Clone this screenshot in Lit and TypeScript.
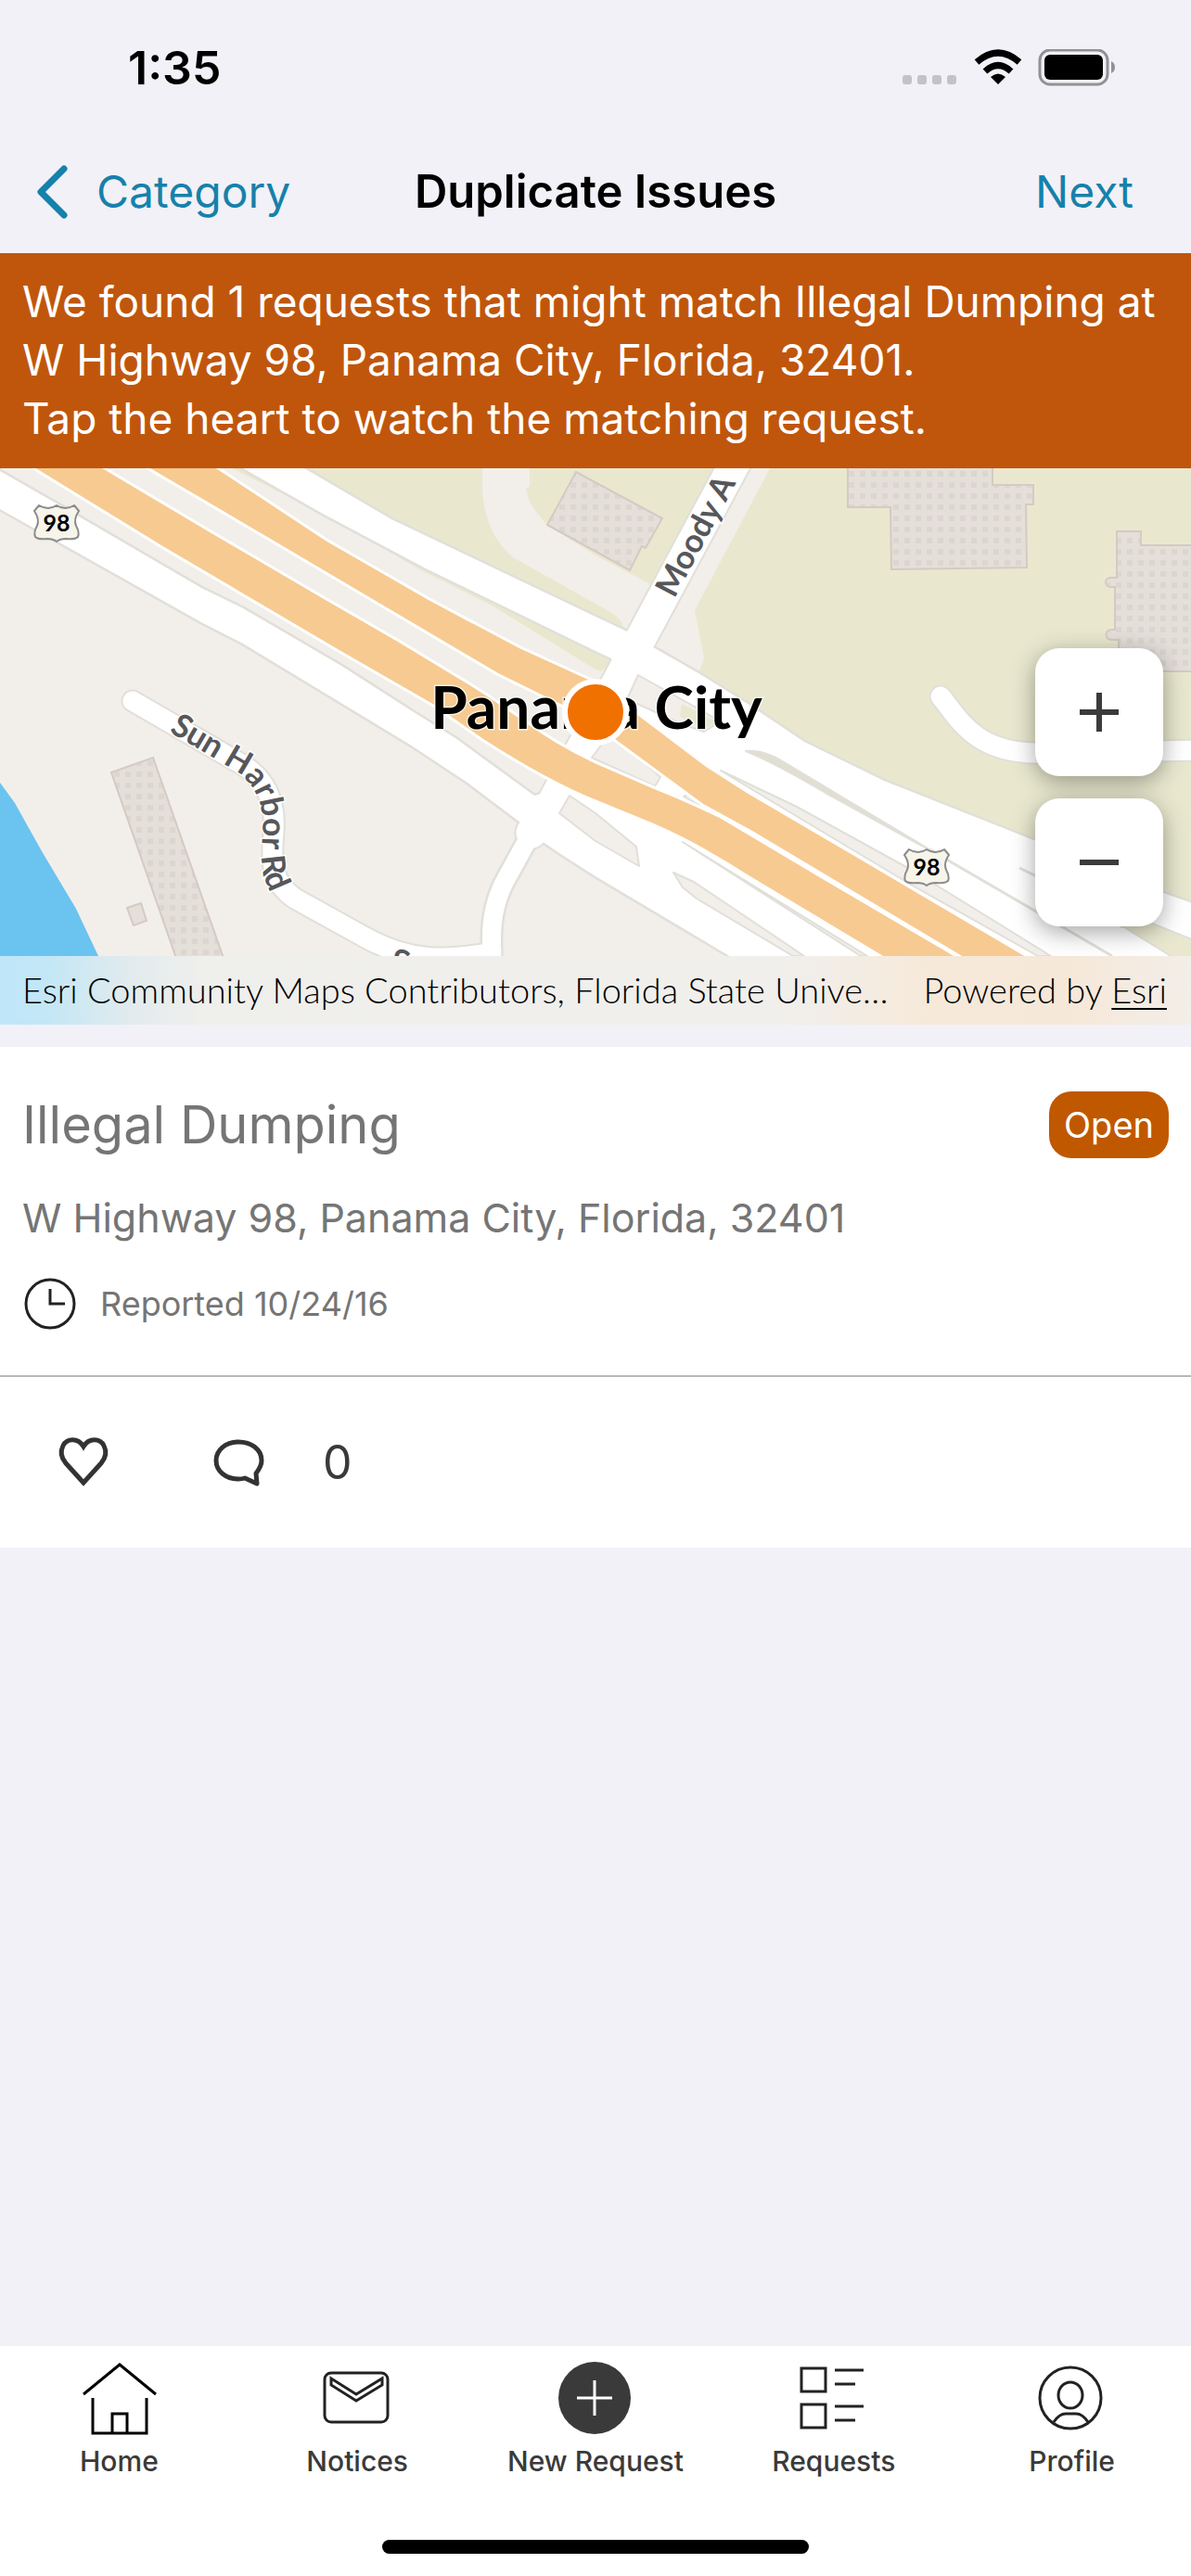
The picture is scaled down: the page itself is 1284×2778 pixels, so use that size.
import { LitElement, html, css, svg } from "lit";
import { customElement, property, state } from "lit/decorators.js";

/** Street map with the issue pin and the zoom controls. */
@customElement("issue-map")
class IssueMap extends LitElement {
  static styles = css`
    :host { display: block; position: relative; }
    .canvas { display: block; width: 100%; height: auto; background: #f2efea; }
    .name { font-family: Lato, "Open Sans", sans-serif; font-weight: 700; }
    .city { font-size: 64px; fill: #000; stroke: #fff; stroke-opacity: 0.7; stroke-width: 3px; paint-order: stroke; }
    .street { font-size: 35px; fill: #57575a; stroke: #fff; stroke-width: 3px; paint-order: stroke; }
    .route { font-size: 25px; fill: #000; }
    .zoom { position: absolute; right: 30px; bottom: 106px; display: flex; flex-direction: column; gap: 24px; }
    .zoom button {
      width: 138px; height: 138px; padding: 0; border: 0; border-radius: 26px; background: #fff;
      box-shadow: 0 6px 26px rgba(0, 0, 0, 0.36); display: grid; place-items: center; cursor: pointer;
    }
    .credits {
      display: flex; justify-content: space-between; align-items: center; height: 74px; padding: 0 26px 2px 24px; box-sizing: border-box;
      font: 300 38px/44px Lato, "Open Sans", sans-serif; color: #000; white-space: nowrap;
      background: linear-gradient(90deg, #bfe6f9 0, #c3e7f6 4%, #e2ebed 11%, #efefec 17%, #f1efec 66%, #f6e9da 78%, #f6e8d9 90%, #f3eee8 100%);
    }
    .credits a { color: inherit; text-decoration-thickness: 2px; text-underline-offset: 5px; }
  `;

  private shield(x: number, y: number) {
    return svg`
      <g transform="translate(${x} ${y})">
        <path d="M-19 -19 Q-9 -13 0 -19 Q9 -13 19 -19 L24 -13 Q18 -4 21 3 Q25 10 23 15 Q20 18 10 17 Q4 17 0 20 Q-4 17 -10 17 Q-20 18 -23 15 Q-25 10 -21 3 Q-18 -4 -24 -13 Z"
          fill="#f7f4ea" stroke="#8b8b8b" stroke-width="2" stroke-linejoin="round"/>
        <text class="name route" text-anchor="middle" y="9">98</text>
      </g>`;
  }

  render() {
    const moody = "M800 -20 L690 185 L596 360 L573 393";
    const harbor = "M143 251 L262 320 C290 338 297 365 295 392 C292 425 292 446 318 464 L392 505 C440 532 480 532 530 522";
    const ramp = "M573 393 L545 444 Q530 472 530 506 L530 540";
    const lane = "M1014 246 C1034 270 1050 306 1117 307 L1300 304";
    const south = "M0 3 L61 38 L217 129 L262 151 L368 213 L446 263 L491 291 L576 353 L610 345 L700 370 L960 526 L1000 540 L810 540 L642 440 L606 417 L581 400 L565 385 L504 339 L442 298 L262 189 L217 166 L0 44 Z";
    const north = "M328 0 L422 55 L642 160 L676 176 L704 193 L753 221 L806 254 L867 295 L953 337 L1117 402 L1254 458 L1300 474 L1300 540 L960 540 L700 345 L659 205 L642 197 L459 108 L348 49 L262 0 Z";
    return html`
      <svg class="canvas" viewBox="0 0 1284 526" role="img" aria-label="Map of Panama City around W Highway 98">
        <defs>
          <pattern id="dots" width="12" height="12" patternUnits="userSpaceOnUse">
            <rect width="12" height="12" fill="#e4dfd9"/><rect x="3" y="3" width="6" height="6" fill="#dcd6d1"/>
          </pattern>
          <path id="harbor-label" d="M182 284 L255 327 C278 344 285 366 283 394 C281 425 280 450 305 472 L360 506"/>
        </defs>
        <path fill="#6bc3f0" d="M0 339 L16 361 L45 413 L82 475 L106 526 H0 Z"/>
        <path fill="#e9e8cf" d="M250 0 L368 59 L450 108 L532 149 L642 217 L648 219 L700 180 L760 260 L1000 420 L1284 526 V0 Z"/>
        <path fill="#f2efea" d="M520 0 L520 26 Q524 72 553 96 L642 146 L660 156 L668 163 L676 178 L701 125 L642 94 L590 61 Q568 38 567 21 L571 20 V0 Z"/>
        <path fill="#f2efea" d="M800 0 H830 L749 153 L759 205 L753 221 L690 200 Z"/>
        <g fill="url(#dots)" stroke="#d5cac3" stroke-width="2">
          <path d="M621 4 L714 54 L696 86 L692 84 L679 110 L590 61 Z"/>
          <path d="M914 -4 V42 H960 L961 109 L1107 107 L1106 39 H1114 V18 H1070 V-4 Z"/>
          <path d="M1204 68 H1230 V83 H1290 V219 H1206 V185 H1198 A5 5 0 0 1 1198 174 H1202 V128 H1197 A5 5 0 0 1 1197 118 H1204 Z"/>
          <path d="M120 328 L165 312 L243 534 L192 534 Z"/>
          <path fill="#e4dfd9" d="M137 474 L152 469 L158 488 L144 493 Z"/>
        </g>
        <g fill="none" stroke="#e1dfd9" stroke-linecap="round">
          <path stroke-width="25" d=${lane}/><path stroke-width="25" d=${harbor}/>
          <path stroke-width="25" stroke-linecap="butt" d=${ramp}/><path stroke-width="37" d=${moody}/>
          <path stroke-width="5" d=${south}/><path stroke-width="5" d=${north}/>
        </g>
        <path fill="#f2efea" d="M602 295 L640 312 L665 285 L720 345 L640 330 Z"/>
        <path fill="#fff" d=${south}/><path fill="#fff" d=${north}/>
        <g fill="none" stroke="#fff" stroke-linecap="round">
          <path stroke-width="21" d=${lane}/><path stroke-width="21" d=${harbor}/>
          <path stroke-width="20" stroke-linecap="butt" d=${ramp}/><path stroke-width="33" stroke-linejoin="round" d=${moody}/>
        </g>
        <g fill="#f2efea" stroke="#e1dfd9" stroke-width="2" stroke-linejoin="round">
          <path d="M688 223 L777 273 L759 284 L735 276 L676 249 Z"/>
          <path fill="#e9e8cf" stroke="none" d="M735 254 L774 274 L759 281 L733 268 Z"/>
          <path d="M650 296 L664 290 L712 333 L706 343 L638 312 Z"/>
          <path d="M737 354 L741 352 L800 384 L790 384 Z"/>
          <path d="M614 353 L642 372 L686 408 L689 429 L642 402 L603 372 Z"/>
          <path d="M726 436 L748 446 L867 526 L855 526 L751 464 L736 452 Z"/>
          <path d="M736 403 L935 526 L928 526 Z"/>
          <path fill="#e1dfd0" d="M804 305 Q824 303 847 318 L1002 411 L990 405 L890 350 Q836 318 804 305 Z"/>
          <path fill="none" stroke-width="3" d="M1002 411 L1117 478 L1199 526"/>
          <path fill="none" stroke-width="3" d="M1099 431 L1130 446 L1211 495"/>
          <path d="M777 326 L859 365 L986 435 L1133 526 L1119 526 L982 449 L850 370 Z"/>
          <path fill="#e9e8cf" d="M1204 490 L1240 490 L1290 510 V532 H1272 Z"/>
        </g>
        <g fill="#f7ca91" stroke="#fff" stroke-width="3">
          <path d="M31 -3 L176 86 L368 199 L467 256 L520 293 Q590 338 642 359 L703 384 Q750 404 806 440 L956 530 H1038 L888 442 L777 376 Q740 358 707 345 L642 317 Q598 296 560 268 Q520 240 491 223 L430 186 L352 141 L229 69 L108 -3 Z"/>
          <path d="M154 -3 L287 75 L536 222 L613 260 L662 293 L757 363 L810 392 L1041 530 H1114 L929 421 L806 349 L761 320 L691 267 L642 230 L561 193 L463 141 L352 77 L231 -3 Z"/>
        </g>
        ${this.shield(61, 59)} ${this.shield(999, 430)}
        <text class="name street"><textPath href="#harbor-label">Sun  Harbor  Rd</textPath></text>
        <text class="name street" transform="translate(727 141) rotate(-62)">Moody A</text>
        <text class="name street" transform="translate(419 541) rotate(16)">S</text>
        <text class="name city" x="643" y="281" text-anchor="middle">Panama City</text>
        <circle cx="642" cy="263" r="33" fill="#f07000" stroke="#fff" stroke-width="6"/>
      </svg>
      <div class="zoom">
        <button aria-label="Zoom in">
          <svg width="44" height="44" viewBox="0 0 44 44"><path d="M1 22 H43 M22 1 V43" stroke="#3b3b3b" stroke-width="6"/></svg>
        </button>
        <button aria-label="Zoom out">
          <svg width="44" height="44" viewBox="0 0 44 44"><path d="M1 22 H43" stroke="#3b3b3b" stroke-width="6"/></svg>
        </button>
      </div>
      <div class="credits">
        <span>Esri Community Maps Contributors, Florida State Unive…</span>
        <span>Powered by <a href="#esri">Esri</a></span>
      </div>`;
  }
}

interface Issue { title: string; address: string; reported: string; status: string; comments: number; }

/** Summary of a reported issue with its watch and comment actions. */
@customElement("issue-card")
class IssueCard extends LitElement {
  static styles = css`
    :host { display: block; background: #fff; color: #757575; }
    .summary { padding: 48px 24px; border-bottom: 2px solid #b7b7b7; }
    .head { display: flex; align-items: center; justify-content: space-between; height: 72px; }
    .title { margin: 0; font-size: 56px; font-weight: 400; line-height: 72px; }
    .badge { padding: 0 16px; border-radius: 24px; background: #c05800; color: #fff; font-size: 38px; line-height: 72px; }
    .address { margin: 36px 0 0; font-size: 43px; line-height: 56px; }
    .reported { display: flex; align-items: center; gap: 24px; margin-top: 36px; height: 58px; font-size: 36px; }
    .actions { display: flex; align-items: center; height: 184px; padding: 0 60px; gap: 108px; }
    button { display: flex; align-items: center; gap: 60px; padding: 0; border: 0; background: none; color: #3a3a3a; font: inherit; font-size: 50px; cursor: pointer; }
    svg { display: block; fill: none; stroke: #333; }
  `;
  @property({ attribute: false }) issue!: Issue;
  @state() private watched = false;

  render() {
    const i = this.issue;
    return html`
      <div class="summary">
        <div class="head"><h2 class="title">${i.title}</h2><span class="badge">${i.status}</span></div>
        <p class="address">${i.address}</p>
        <div class="reported">
          <svg width="60" height="58" viewBox="0 0 60 58"><circle cx="30" cy="29" r="26" stroke="#222" stroke-width="3"/><path d="M30 13 V29 H46" stroke="#222" stroke-width="3"/></svg>
          <span>Reported ${i.reported}</span>
        </div>
      </div>
      <div class="actions">
        <button aria-label="Watch" aria-pressed=${this.watched} @click=${() => (this.watched = !this.watched)}>
          <svg width="60" height="60" viewBox="0 0 60 60"><path d="M30 52 L11 31 C5 24 5 18 8 12 C12 4 24 3 30 13 C36 3 48 4 52 12 C55 18 55 24 49 31 Z" stroke-width="5"/></svg>
        </button>
        <button aria-label="Comments">
          <svg width="60" height="60" viewBox="0 0 60 60"><path d="M48 42 C51 38 54 33 54 28 C54 16 43 8 29 8 C15 8 5 17 5 28 C5 40 16 48 29 48 Q33 48 36 47 L49 53 Z" stroke-width="5" stroke-linejoin="round"/></svg>
          <span>${i.comments}</span>
        </button>
      </div>`;
  }
}

const tabs = [
  { name: "Home", art: svg`<path stroke="#000" d="M2 36 L41 4 L80 36 M12 40 V78 H70 V40 M33 78 V57 H49 V78"/>` },
  { name: "Notices", art: svg`<rect x="5" y="13" width="68" height="53" rx="7"/><path d="M12 19 L39 36 L67 19 V26 L39 43 L12 26 Z"/>` },
  { name: "New Request", art: svg`<circle cx="39" cy="40" r="39" fill="#3a3a3a" stroke="none"/><path d="M20 40 H58 M39 21 V59" stroke="#fff"/>` },
  { name: "Requests", art: svg`<path d="M5 8 H31 V33 H5 Z M5 47 H31 V72 H5 Z M41 10 H72 M41 25 H63 M41 49 H72 M41 64 H63"/>` },
  { name: "Profile", art: svg`<circle cx="38" cy="40" r="33"/><ellipse cx="38" cy="37" rx="13" ry="14"/><path d="M20 66 C24 60 28 57 33 57 H44 C49 57 53 60 57 66"/>` },
];

@customElement("app-root")
class AppRoot extends LitElement {
  static styles = css`
    :host { display: flex; flex-direction: column; min-height: 100vh; background: #f2f1f7; font-family: Inter, "Liberation Sans", sans-serif; }
    .status { display: flex; align-items: center; justify-content: space-between; height: 146px; padding: 0 80px 0 138px; box-sizing: border-box; font-size: 50px; font-weight: 600; color: #000; }
    .nav { display: grid; grid-template-columns: 1fr auto 1fr; align-items: center; height: 127px; padding: 0 38px 6px; box-sizing: border-box; font-size: 48px; }
    .nav a { display: flex; align-items: center; gap: 28px; color: #1681ab; text-decoration: none; }
    .nav .next { justify-self: end; padding-right: 24px; }
    .nav h1 { margin: 0; font-size: 49px; font-weight: 600; color: #000; }
    .banner { margin: 0; padding: 21px 24px 22px; background: #c0560c; color: #fff; font-size: 46px; line-height: 63px; }
    main { flex: 1; }
    issue-card { margin-top: 24px; }
    .tabs { display: grid; grid-template-columns: repeat(5, 1fr); padding-top: 16px; background: #fff; }
    .tabs a { display: flex; flex-direction: column; align-items: center; gap: 8px; color: #3a3a3a; text-decoration: none; font-size: 30px; font-weight: 500; line-height: 40px; }
    .tabs svg { fill: none; stroke: #222; stroke-width: 3; overflow: visible; }
    .foot { display: flex; justify-content: center; padding: 65px 0 24px; background: #fff; }
    .grip { width: 460px; height: 15px; border-radius: 8px; background: #000; }
  `;

  private issue: Issue = {
    title: "Illegal Dumping",
    address: "W Highway 98, Panama City, Florida, 32401",
    reported: "10/24/16",
    status: "Open",
    comments: 0,
  };

  render() {
    return html`
      <div class="status">
        <span>1:35</span>
        <svg width="232" height="40" viewBox="0 0 232 40" aria-hidden="true">
          <g fill="#c3c2c8"><rect x="1" y="28" width="10" height="10" rx="3"/><rect x="17" y="28" width="10" height="10" rx="3"/><rect x="33" y="28" width="10" height="10" rx="3"/><rect x="49" y="28" width="10" height="10" rx="3"/></g>
          <path d="M104 38 L96 30 Q104 23 112 30 Z"/>
          <path fill="none" stroke="#000" stroke-width="7" d="M90 24 Q104 11 118 24 M81 14 Q104 -6 127 14"/>
          <rect x="149" y="1" width="73" height="37" rx="11" fill="none" stroke="#929196" stroke-width="3"/>
          <rect x="154" y="6" width="63" height="27" rx="6"/>
          <path fill="#929196" d="M226 13 Q230 15 230 19.5 Q230 24 226 26 Z"/>
        </svg>
      </div>
      <nav class="nav">
        <a href="#category">
          <svg width="38" height="60" viewBox="0 0 38 60" aria-hidden="true"><path d="M31 5 L6 30 L31 55" fill="none" stroke="#1681ab" stroke-width="7" stroke-linecap="round" stroke-linejoin="round"/></svg>
          Category
        </a>
        <h1>Duplicate Issues</h1>
        <a class="next" href="#next">Next</a>
      </nav>
      <p class="banner">We found 1 requests that might match Illegal Dumping at W Highway 98, Panama City, Florida, 32401.<br>Tap the heart to watch the matching request.</p>
      <main>
        <issue-map></issue-map>
        <issue-card .issue=${this.issue}></issue-card>
      </main>
      <nav class="tabs">
        ${tabs.map((t) => html`<a href="#${t.name}"><svg width="80" height="80" viewBox="0 0 80 80" aria-hidden="true">${t.art}</svg><span>${t.name}</span></a>`)}
      </nav>
      <div class="foot"><div class="grip"></div></div>`;
  }
}
